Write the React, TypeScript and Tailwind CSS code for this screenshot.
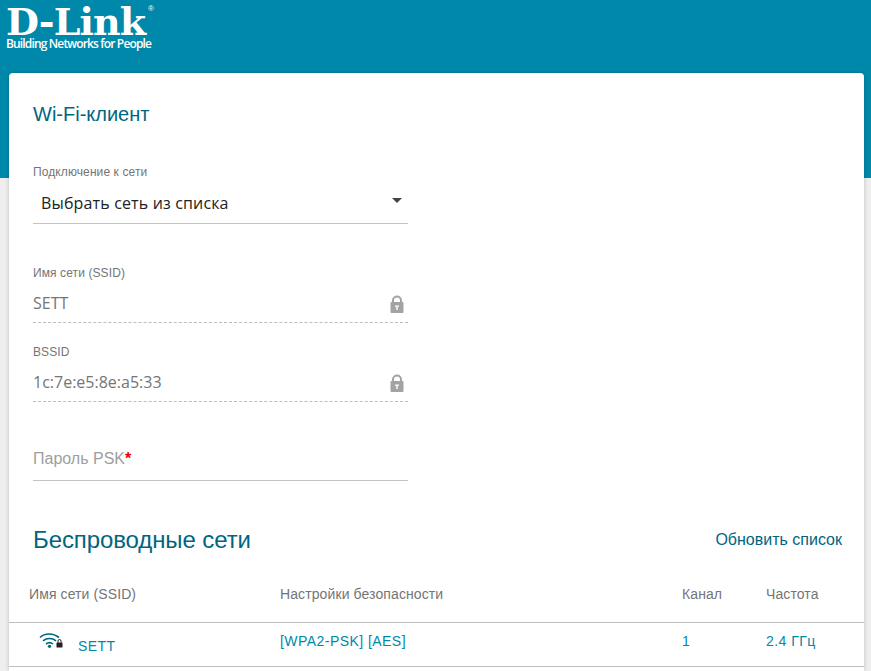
const sans = "font-['Liberation_Sans',Arial,sans-serif]"

function Lock() {
  return (
    <svg width="14" height="18" viewBox="0 0 14 18" className="shrink-0">
      <path d="M3 8V5.500a4 4 0 0 1 8 0V8" fill="none" stroke="#a3a3a3" strokeWidth="2" />
      <rect x="0.500" y="7" width="13" height="11" rx="1" fill="#a3a3a3" />
      <path d="M5 10.500h4v1.300H7.700V15H6.300v-3.200H5z" fill="#fff" />
    </svg>
  )
}

function WifiLock() {
  return (
    <svg width="24" height="18" viewBox="0 0 24 18" className="shrink-0">
      <g fill="none" stroke="#00667f" strokeWidth="1.6">
        <path d="M1 5.500C6 .8 14 .8 20 5.500" />
        <path d="M4 8.800c3.600-3 9.400-3 13 0" />
        <path d="M7 12c2.200-1.600 5-1.600 7 0" />
      </g>
      <circle cx="10.500" cy="14.300" r="1.600" fill="#00667f" />
      <rect x="17.500" y="10.500" width="6" height="5" rx="0.500" fill="#222" />
      <path d="M19 10.500V9a1.500 1.500 0 0 1 3 0v1.500" fill="none" stroke="#222" strokeWidth="1" />
    </svg>
  )
}

function ReadonlyField({ label, value }: { label: string; value: string }) {
  return (
    <div className="w-[375px] h-[79px] pt-[1px]">
      <div className="text-[12px] leading-[13px] tracking-[0.1px] text-[#757575]">{label}</div>
      <div className="h-[43px] pt-[11px] pr-[4px] flex items-start justify-between border-b border-dashed border-[#bdbdbd]">
        <span className="font-['Open_Sans',sans-serif] text-[16px] leading-[24px] text-[#757575]">{value}</span>
        <span className="mt-[4px]"><Lock /></span>
      </div>
    </div>
  )
}

export default function App() {
  return (
    <div className={`${sans} h-[671px] overflow-hidden bg-[linear-gradient(#0088aa_0,#0088aa_178px,#eeeeee_178px)]`}>
      {/* ロゴ */}
      <div className="h-[73px] pl-[6px] text-white">
        <div className="relative w-[150px] h-[37px]">
          <div className="font-['DejaVu_Serif',serif] font-bold text-[38px] leading-[44px] tracking-[-0.9px] whitespace-nowrap">D-Link</div>
          <span className="absolute left-[142px] top-[5px] text-[8px] leading-none">®</span>
        </div>
        <div className="font-['Open_Sans',sans-serif] font-semibold text-[12px] leading-[14px] whitespace-nowrap tracking-[-0.85px]">Building Networks for People</div>
      </div>

      {/* カード */}
      <div className="ml-[9px] w-[855px] h-[598px] bg-white rounded-t-[4px] shadow-[0_0_4px_rgba(0,0,0,0.2)]">
        <div className="pl-[24px] pt-[28px]">
          <h1 className="text-[20px] leading-[26px] text-[#00667f]">Wi-Fi-клиент</h1>

          <div className="mt-[39px] w-[375px]">
            <div className="text-[12px] leading-[13px] tracking-[0.1px] text-[#757575]">Подключение к сети</div>
            <div className="h-[45px] pt-[12px] pl-[8px] pr-[6px] flex items-start justify-between border-b border-[#c4c4c4]">
              <span className="font-['Open_Sans',sans-serif] text-[16px] leading-[24px] tracking-[0.15px] text-[#222222]">Выбрать сеть из списка</span>
              <span className="mt-[7px] w-0 h-0 border-x-[5px] border-x-transparent border-t-[5px] border-t-[#444444]" />
            </div>
          </div>

          <div className="mt-[42px]"><ReadonlyField label="Имя сети (SSID)" value="SETT" /></div>
          <ReadonlyField label="BSSID" value="1c:7e:e5:8e:a5:33" />

          <div className="w-[375px] h-[57px] border-b border-[#c4c4c4] pt-[23px]">
            <span className="text-[16px] leading-[24px] text-[#9e9e9e]">Пароль PSK<span className="text-[#f00000] font-bold">*</span></span>
          </div>
        </div>

        <div className="mt-[41px] pl-[24px] pr-[22px] flex items-center justify-between h-[36px]">
          <h2 className="text-[24px] leading-[36px] tracking-[-0.1px] text-[#00667f]">Беспроводные сети</h2>
          <span className="text-[16px] leading-[24px] text-[#00667f]">Обновить список</span>
        </div>

        <div className="mt-[26px] h-[39px] flex items-start border-b border-[#bdbdbd] text-[14px] leading-[20px] tracking-[0.1px] text-[#757575]">
          <div className="w-[271px] pl-[20px]">Имя сети (SSID)</div>
          <div className="w-[402px]">Настройки безопасности</div>
          <div className="w-[84px]">Канал</div>
          <div>Частота</div>
        </div>

        <div className="h-[44px] flex items-start border-b border-[#bdbdbd] text-[14px] leading-[20px] tracking-[0.45px] text-[#0088aa]">
          <div className="w-[271px] pl-[30px] pt-[9px] flex items-start">
            <WifiLock />
            <span className="ml-[15px] mt-[4px]">SETT</span>
          </div>
          <div className="w-[402px] pt-[8px]">[WPA2-PSK] [AES]</div>
          <div className="w-[84px] pt-[8px]">1</div>
          <div className="pt-[8px]">2.4 ГГц</div>
        </div>
      </div>
    </div>
  )
}
